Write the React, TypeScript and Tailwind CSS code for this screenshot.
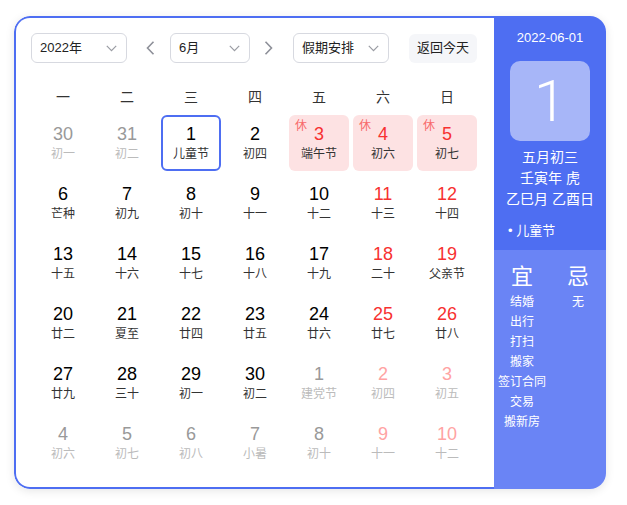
import React from "react";

type Day = {
  n: number;
  l: string;
  other?: boolean;
  wk?: boolean;
  rest?: boolean;
  sel?: boolean;
};

const WEEK = ["一", "二", "三", "四", "五", "六", "日"];

const ROWS: Day[][] = [
  [
    { n: 30, l: "初一", other: true },
    { n: 31, l: "初二", other: true },
    { n: 1, l: "儿童节", sel: true },
    { n: 2, l: "初四" },
    { n: 3, l: "端午节", rest: true },
    { n: 4, l: "初六", rest: true, wk: true },
    { n: 5, l: "初七", rest: true, wk: true },
  ],
  [
    { n: 6, l: "芒种" },
    { n: 7, l: "初九" },
    { n: 8, l: "初十" },
    { n: 9, l: "十一" },
    { n: 10, l: "十二" },
    { n: 11, l: "十三", wk: true },
    { n: 12, l: "十四", wk: true },
  ],
  [
    { n: 13, l: "十五" },
    { n: 14, l: "十六" },
    { n: 15, l: "十七" },
    { n: 16, l: "十八" },
    { n: 17, l: "十九" },
    { n: 18, l: "二十", wk: true },
    { n: 19, l: "父亲节", wk: true },
  ],
  [
    { n: 20, l: "廿二" },
    { n: 21, l: "夏至" },
    { n: 22, l: "廿四" },
    { n: 23, l: "廿五" },
    { n: 24, l: "廿六" },
    { n: 25, l: "廿七", wk: true },
    { n: 26, l: "廿八", wk: true },
  ],
  [
    { n: 27, l: "廿九" },
    { n: 28, l: "三十" },
    { n: 29, l: "初一" },
    { n: 30, l: "初二" },
    { n: 1, l: "建党节", other: true },
    { n: 2, l: "初四", other: true, wk: true },
    { n: 3, l: "初五", other: true, wk: true },
  ],
  [
    { n: 4, l: "初六", other: true },
    { n: 5, l: "初七", other: true },
    { n: 6, l: "初八", other: true },
    { n: 7, l: "小暑", other: true },
    { n: 8, l: "初十", other: true },
    { n: 9, l: "十一", other: true, wk: true },
    { n: 10, l: "十二", other: true, wk: true },
  ],
];

const YI = ["结婚", "出行", "打扫", "搬家", "签订合同", "交易", "搬新房"];

function Chevron() {
  return (
    <svg width="11" height="7" viewBox="0 0 11 7" fill="none" stroke="#9a9ca3" strokeWidth="1.2">
      <polyline points="0.8,0.8 5.5,5.6 10.2,0.8" />
    </svg>
  );
}

function Arrow({ dir }: { dir: "left" | "right" }) {
  return (
    <div className="flex w-6 items-center justify-center">
      <svg width="9" height="14" viewBox="0 0 9 14" fill="none" stroke="#8e9099" strokeWidth="1.6">
        {dir === "left" ? (
          <polyline points="7.5,0.8 1.5,7 7.5,13.2" />
        ) : (
          <polyline points="1.5,0.8 7.5,7 1.5,13.2" />
        )}
      </svg>
    </div>
  );
}

function Select({ label, width }: { label: string; width: string }) {
  return (
    <div
      className={`flex h-[30px] ${width} items-center justify-between rounded-[6px] border border-[#d7d9e0] pl-2 pr-[9px] text-[13px] text-[#222]`}
    >
      <span>{label}</span>
      <Chevron />
    </div>
  );
}

function Cell({ d }: { d: Day }) {
  let num = "text-black";
  let lun = "text-[#333]";
  if (d.other) {
    num = d.wk ? "text-[#ffa3a3]" : "text-[#999]";
    lun = "text-[#bbb]";
  } else if (d.wk || d.rest) {
    num = "text-[#f73131]";
  }
  const box = d.sel
    ? "border-2 border-[#4e6ef2]"
    : d.rest
      ? "bg-[#fde2e3]"
      : "";
  return (
    <div className="p-[2px]">
      <div className={`relative flex h-[56px] flex-col items-center justify-center rounded-[6px] ${box}`}>
        {d.rest && (
          <span className="absolute left-[6px] top-[3px] text-[12px] leading-[16px] text-[#f86a6a]">休</span>
        )}
        <span className={`text-[18px] leading-[20px] ${num}`}>{d.n}</span>
        <span className={`mt-[2px] text-[12px] leading-[16px] ${lun}`}>{d.l}</span>
      </div>
    </div>
  );
}

export default function App() {
  return (
    <div
      className="min-h-[505px] w-[627px] bg-white pl-[14px] pt-[16px]"
      style={{ fontFamily: '"Liberation Sans", "Noto Sans CJK SC", sans-serif' }}
    >
      <div className="flex h-[473px] w-[592px] overflow-hidden rounded-2xl shadow-[0_2px_10px_rgba(0,0,0,0.1)]">
        {/* calendar body */}
        <div className="w-[480px] rounded-l-2xl border-y-2 border-l-2 border-[#4e6ef2] bg-white pl-[15px] pt-[15px]">
          <div className="flex h-[30px] items-center">
            <Select label="2022年" width="w-[96px]" />
            <div className="ml-[11px]">
              <Arrow dir="left" />
            </div>
            <div className="ml-2">
              <Select label="6月" width="w-[80px]" />
            </div>
            <div className="ml-[6px]">
              <Arrow dir="right" />
            </div>
            <div className="ml-[13px]">
              <Select label="假期安排" width="w-[96px]" />
            </div>
            <div className="ml-[20px] flex h-[29px] w-[68px] items-center justify-center rounded-[6px] bg-[#f5f6f9] text-[13px] text-[#222]">
              返回今天
            </div>
          </div>

          <div className="mt-[18px] grid w-[448px] grid-cols-7">
            {WEEK.map((w) => (
              <div key={w} className="flex h-[32px] items-center justify-center text-[14px] text-[#333]">
                {w}
              </div>
            ))}
            {ROWS.flat().map((d, i) => (
              <Cell key={i} d={d} />
            ))}
          </div>
        </div>

        {/* side panel */}
        <div className="flex w-[112px] flex-col text-white">
          <div className="flex h-[234px] flex-col items-center bg-[#4e6ef2] pt-[13px]">
            <div className="text-[13px] leading-[18px]">2022-06-01</div>
            <div
              className="mt-[14px] flex h-[80px] w-[80px] items-center justify-center rounded-[10px] bg-[#a7b6f8] text-[58px] font-light leading-none"
              style={{ fontFamily: 'Roboto, "Liberation Sans", sans-serif' }}
            >
              1
            </div>
            <div className="mt-[6px] text-center text-[14px] leading-[21px]">
              <div>五月初三</div>
              <div>壬寅年 虎</div>
              <div>乙巳月 乙酉日</div>
            </div>
            <div className="mt-[10px] w-full pl-[14px] text-[13px] leading-[21px]">• 儿童节</div>
          </div>
          <div className="flex flex-1 bg-[#6a84f5] pt-[14px]">
            <div className="flex w-[56px] flex-col items-center">
              <div className="text-[22px] leading-[26px]">宜</div>
              <div className="mt-[2px] flex flex-col items-center text-[12px] leading-[20px]">
                {YI.map((y) => (
                  <div key={y} className="whitespace-nowrap">
                    {y}
                  </div>
                ))}
              </div>
            </div>
            <div className="flex w-[56px] flex-col items-center">
              <div className="text-[22px] leading-[26px]">忌</div>
              <div className="mt-[2px] text-[12px] leading-[20px]">无</div>
            </div>
          </div>
        </div>
      </div>
    </div>
  );
}
